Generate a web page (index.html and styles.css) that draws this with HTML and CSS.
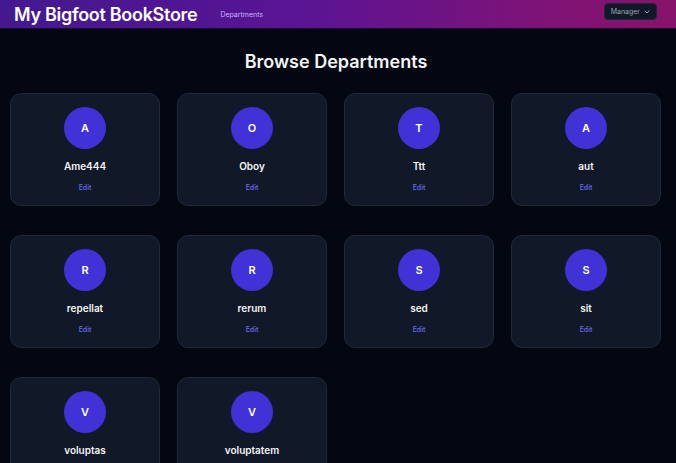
FILE: index.html
```html
<!DOCTYPE html>
<html lang="en">
<head>
  <meta charset="UTF-8" />
  <meta name="viewport" content="width=device-width, initial-scale=1" />
  <title>My Bigfoot BookStore</title>
  <link rel="stylesheet" href="styles.css">
</head>
<body>

  <!-- Top bar -->
  <header class="topbar">
    <div class="topbar-left">
      <a class="brand" href="#">My Bigfoot BookStore</a>
      <a class="navlink" href="#">Departments</a>
    </div>
    <button class="userbtn">Manager
      <svg width="6" height="4" viewBox="0 0 6 4"><path d="M1 1l2 2 2-2" fill="none" stroke="currentColor" stroke-width="1" stroke-linecap="round"/></svg>
    </button>
  </header>

  <main class="page">
    <h1 class="page-title">Browse Departments</h1>

    <div class="deptgrid">
      <div class="deptcard">
        <div class="avatar">A</div>
        <h3>Ame444</h3>
        <a class="edit" href="#">Edit</a>
      </div>
      <div class="deptcard">
        <div class="avatar">O</div>
        <h3>Oboy</h3>
        <a class="edit" href="#">Edit</a>
      </div>
      <div class="deptcard">
        <div class="avatar">T</div>
        <h3>Ttt</h3>
        <a class="edit" href="#">Edit</a>
      </div>
      <div class="deptcard">
        <div class="avatar">A</div>
        <h3>aut</h3>
        <a class="edit" href="#">Edit</a>
      </div>
      <div class="deptcard">
        <div class="avatar">R</div>
        <h3>repellat</h3>
        <a class="edit" href="#">Edit</a>
      </div>
      <div class="deptcard">
        <div class="avatar">R</div>
        <h3>rerum</h3>
        <a class="edit" href="#">Edit</a>
      </div>
      <div class="deptcard">
        <div class="avatar">S</div>
        <h3>sed</h3>
        <a class="edit" href="#">Edit</a>
      </div>
      <div class="deptcard">
        <div class="avatar">S</div>
        <h3>sit</h3>
        <a class="edit" href="#">Edit</a>
      </div>
      <div class="deptcard">
        <div class="avatar">V</div>
        <h3>voluptas</h3>
        <a class="edit" href="#">Edit</a>
      </div>
      <div class="deptcard">
        <div class="avatar">V</div>
        <h3>voluptatem</h3>
        <a class="edit" href="#">Edit</a>
      </div>
    </div>
  </main>

</body>
</html>
```

FILE: styles.css
```css
* {
  margin: 0;
  padding: 0;
  box-sizing: border-box;
}

body {
  background: #030712;
  color: #f3f4f6;
  font-family: Inter, "Noto Sans", sans-serif;
  height: 100vh;
  overflow: hidden;
}

a {
  text-decoration: none;
}

/* Top bar */
.topbar {
  height: 29px;
  display: flex;
  justify-content: space-between;
  align-items: center;
  padding: 0 19px 0 14px;
  background: linear-gradient(90deg, #43198f 0%, #5a1494 45%, #7e1377 80%, #88136a 100%);
  border-bottom: 1px solid #1b0f2e;
}

.topbar-left {
  display: flex;
  align-items: center;
  gap: 23px;
}

.brand {
  color: #fff;
  font-size: 18px;
  font-weight: 600;
  letter-spacing: -0.3px;
}

.navlink {
  color: #c4b5fd;
  font-size: 7px;
  margin-top: 1px;
}

.userbtn {
  display: flex;
  align-items: center;
  gap: 4px;
  height: 17px;
  padding: 0 6px;
  margin-top: -5px;
  background: #111827;
  color: #9ca3af;
  border: 1px solid #1f2937;
  border-radius: 4px;
  font-family: inherit;
  font-size: 7px;
}

/* Page */
.page {
  padding: 0 14px 0 10px;
}

.page-title {
  text-align: center;
  font-size: 18px;
  font-weight: 600;
  color: #f3f4f6;
  margin: 22px 0 21px;
}

.deptgrid {
  display: grid;
  grid-template-columns: repeat(4, 150px);
  column-gap: 17px;
  row-gap: 29px;
}

.deptcard {
  height: 113px;
  background: #111827;
  border: 1px solid #1f2937;
  border-radius: 11px;
  display: flex;
  flex-direction: column;
  align-items: center;
  padding-top: 13px;
}

.avatar {
  width: 42px;
  height: 42px;
  border-radius: 50%;
  background: #4032d6;
  color: #fff;
  display: flex;
  justify-content: center;
  align-items: center;
  font-size: 11px;
  font-weight: 600;
}

.deptcard h3 {
  font-size: 10px;
  font-weight: 600;
  color: #f3f4f6;
  margin-top: 11px;
}

.edit {
  color: #6b6cf2;
  font-size: 7px;
  font-weight: 500;
  margin-top: 11px;
}
```
